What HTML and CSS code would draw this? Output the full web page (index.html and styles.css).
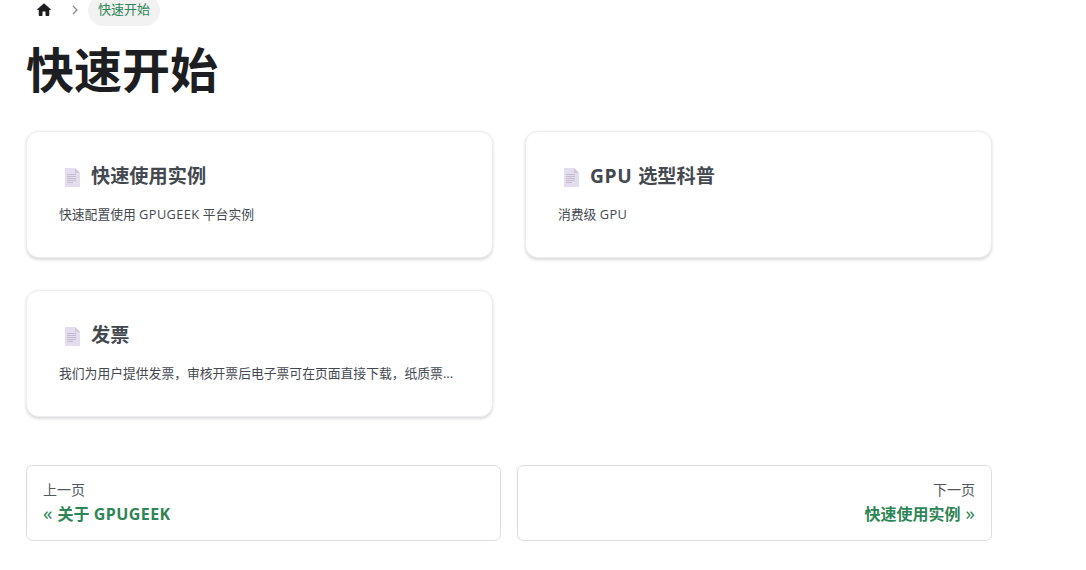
FILE: index.html
```html
<!DOCTYPE html>
<html lang="zh">
<head>
<meta charset="utf-8">
<title>快速开始</title>
<link rel="stylesheet" href="styles.css">
</head>
<body>
<main class="doc">
  <nav class="crumbs">
    <a class="crumb-home" href="#"><svg class="home-icon" viewBox="0 0 24 24"><path d="M10 19v-5h4v5c0 .55.45 1 1 1h3c.55 0 1-.45 1-1v-7h1.7c.46 0 .68-.57.33-.87L12.67 3.6c-.38-.34-.96-.34-1.34 0l-8.36 7.53c-.34.3-.13.87.33.87H5v7c0 .55.45 1 1 1h3c.55 0 1-.45 1-1z"/></svg></a>
    <svg class="chevron" viewBox="0 0 10 12"><path d="M3 2l4 4-4 4"/></svg>
    <span class="crumb-active">快速开始</span>
  </nav>
  <h1 class="title">快速开始</h1>
  <section class="cards">
    <a class="card" href="#">
      <h2 class="card-title"><svg class="doc-icon" viewBox="0 0 15 19"><path class="sheet" d="M0 0h10l5 5v14H0z"/><path class="fold" d="M10 0l5 5h-5z"/><path class="lines" d="M2 6.5h9M2 8.5h9M2 10.5h9M2 12.5h9M2 14.5h6"/></svg><span>快速使用实例</span></h2>
      <p class="card-text">快速配置使用 <span class="latin">GPUGEEK</span> 平台实例</p>
    </a>
    <a class="card" href="#">
      <h2 class="card-title"><svg class="doc-icon" viewBox="0 0 15 19"><path class="sheet" d="M0 0h10l5 5v14H0z"/><path class="fold" d="M10 0l5 5h-5z"/><path class="lines" d="M2 6.5h9M2 8.5h9M2 10.5h9M2 12.5h9M2 14.5h6"/></svg><span><span class="latin-title">GPU </span>选型科普</span></h2>
      <p class="card-text">消费级 <span class="latin">GPU</span></p>
    </a>
    <a class="card" href="#">
      <h2 class="card-title"><svg class="doc-icon" viewBox="0 0 15 19"><path class="sheet" d="M0 0h10l5 5v14H0z"/><path class="fold" d="M10 0l5 5h-5z"/><path class="lines" d="M2 6.5h9M2 8.5h9M2 10.5h9M2 12.5h9M2 14.5h6"/></svg><span>发票</span></h2>
      <p class="card-text">我们为用户提供发票，审核开票后电子票可在页面直接下载，纸质票...</p>
    </a>
  </section>
  <nav class="pager">
    <a class="pager-link" href="#">
      <div class="pager-sub">上一页</div>
      <div class="pager-label"><span class="guil-prev">«</span> 关于 <span class="latin-label">GPUGEEK</span></div>
    </a>
    <a class="pager-link next" href="#">
      <div class="pager-sub">下一页</div>
      <div class="pager-label">快速使用实例 <span class="guil-next">»</span></div>
    </a>
  </nav>
</main>
</body>
</html>
```
FILE: styles.css
```css
* { box-sizing: border-box; }
html, body { margin: 0; padding: 0; background: #fff; overflow: hidden; }
body {
  height: 570px;
  font-family: "Open Sans", "Noto Sans CJK SC", sans-serif;
  color: #1c1e21;
  font-size: 16px;
}
a { color: inherit; text-decoration: none; }
.doc { width: 966px; margin: -5px 0 0 26px; }
.crumbs { display: flex; align-items: center; height: 31px; }
.crumb-home { display: flex; margin: 0 0 2px 9px; }
.home-icon { width: 18px; height: 18px; fill: #1c1e21; }
.chevron { width: 10px; height: 12px; margin: 0 0 2px 17px; fill: none; stroke: #888; stroke-width: 1.3; }
.crumb-active {
  margin-left: 8px;
  height: 31px;
  padding: 0 10px;
  line-height: 29px;
  border-radius: 16px;
  background: #f2f2f2;
  color: #2e8555;
  font-size: 13px;
}
.title { margin: 11px 0 0; font-size: 48px; line-height: 66px; font-weight: 700; color: #1c1e21; }
.cards { display: grid; grid-template-columns: 467px 467px; column-gap: 32px; row-gap: 32px; margin-top: 28px; }
.card {
  display: block;
  height: 127px;
  padding: 31px 32px 32px;
  border: 1px solid #ebedf0;
  border-radius: 12.8px;
  background: #fff;
  box-shadow: 0 1.5px 3px 0 rgba(0,0,0,.15);
}
.card-title { display: flex; align-items: center; margin: 0 0 15px; font-size: 19.2px; line-height: 26px; font-weight: 700; color: #444950; }
.doc-icon { width: 15px; height: 19px; margin: 2px 11px 0 6px; flex: none; }
.sheet { fill: #e4ddf0; }
.fold { fill: #cfc6dd; }
.lines { stroke: #c3bbd0; stroke-width: 1; fill: none; }
.card-text { margin: 0; font-size: 12.8px; line-height: 20px; color: #444950; }
.latin { letter-spacing: .03em; }
.latin-title { letter-spacing: .035em; }
.latin-label { letter-spacing: .027em; }
.pager { display: grid; grid-template-columns: 1fr 1fr; gap: 16px; margin-top: 48px; }
.pager-link { display: block; height: 76px; padding: 14px 16px; border: 1px solid #dadde1; border-radius: 6.4px; }
.next { text-align: right; }
.pager-sub { font-size: 14px; line-height: 20px; color: #525860; }
.pager-label { margin-top: 2px; font-size: 16px; line-height: 24px; font-weight: 700; color: #2e8555; }
.guil-prev { font-size: 19px; line-height: 1; font-weight: 400; margin-right: 1px; }
.guil-next { font-size: 19px; line-height: 1; font-weight: 400; margin-left: 1px; }
```
